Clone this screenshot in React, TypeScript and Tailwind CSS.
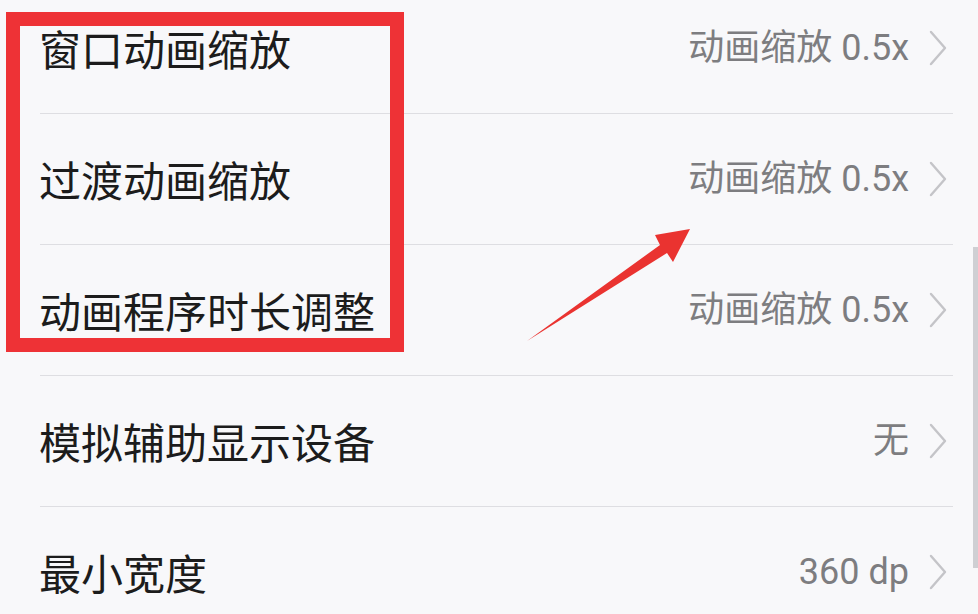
import React from "react";

const rows = [
  { label: "窗口动画缩放", value: "动画缩放 0.5x" },
  { label: "过渡动画缩放", value: "动画缩放 0.5x" },
  { label: "动画程序时长调整", value: "动画缩放 0.5x" },
  { label: "模拟辅助显示设备", value: "无" },
  { label: "最小宽度", value: "360 dp" },
];

function Chevron() {
  return (
    <svg width="20" height="36" viewBox="0 0 20 36" className="shrink-0">
      <polyline
        points="3,2 17,18 3,34"
        fill="none"
        stroke="#c4c4c8"
        strokeWidth="2.4"
        strokeLinecap="round"
        strokeLinejoin="round"
      />
    </svg>
  );
}

export default function App() {
  return (
    <div className="relative w-[978px] h-[614px] overflow-hidden bg-[#f8f8fa]">
      <div className="-mt-[17px]">
        {rows.map((r, i) => (
          <div
            key={i}
            className="ml-[40px] mr-[25px] h-[131px] border-b border-[#dedee2] flex items-center justify-between"
          >
            <span
              className="text-[42px] leading-none text-[#1c1c1c] -ml-[1px]"
              style={{ fontFamily: '"Noto Sans CJK SC", sans-serif' }}
            >
              {r.label}
            </span>
            <div className="flex items-center gap-[19px] pr-[5px]">
              <span
                className="text-[36px] leading-none text-[#7d7d80]"
                style={{ fontFamily: 'Roboto, "Noto Sans CJK SC", sans-serif' }}
              >
                {r.value}
              </span>
              <Chevron />
            </div>
          </div>
        ))}
      </div>

      {/* scrollbar */}
      <div className="absolute right-0 top-[247px] w-[5px] h-[321px] bg-[#cfcfd3]" />

      {/* red highlight box */}
      <div className="absolute left-[6px] top-[12px] w-[398px] h-[340px] border-[14px] border-[#ee3236]" />

      {/* red arrow */}
      <svg className="absolute inset-0 pointer-events-none" width="978" height="614">
        <polygon
          points="527,341 660,245 655,235 690,229 673,262 667,253"
          fill="#ea3330"
          strokeLinejoin="round"
        />
      </svg>
    </div>
  );
}
